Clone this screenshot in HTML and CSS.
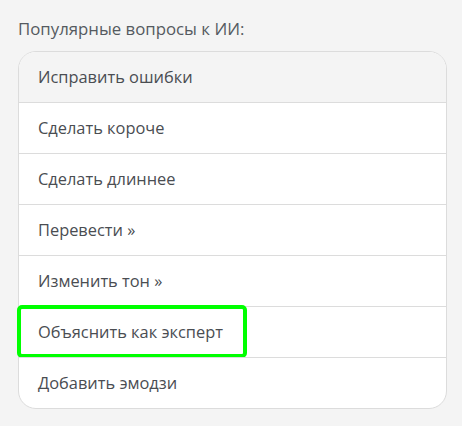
FILE: index.html
```html
<!DOCTYPE html>
<html lang="ru">
<head>
<meta charset="utf-8">
<link rel="stylesheet" href="styles.css">
</head>
<body>
<div class="panel">
  <div class="title">Популярные вопросы к ИИ:</div>
  <ul class="list">
    <li class="item active">Исправить ошибки</li>
    <li class="item">Сделать короче</li>
    <li class="item">Сделать длиннее</li>
    <li class="item">Перевести »</li>
    <li class="item">Изменить тон »</li>
    <li class="item highlighted"><span class="hl-box"></span>Объяснить как эксперт</li>
    <li class="item">Добавить эмодзи</li>
  </ul>
</div>
</body>
</html>
```
FILE: styles.css
```css
html, body {
  margin: 0;
  padding: 0;
  background: #f4f4f4;
}
body {
  font-family: "Open Sans", "Noto Sans", sans-serif;
  color: #4d4d4d;
}
.panel {
  padding: 17px 16px 0 18px;
}
.title {
  font-size: 16.8px;
  line-height: 23px;
  height: 34px;
  color: #555a60;
}
.list {
  list-style: none;
  margin: 0;
  padding: 0;
  width: 427px;
  background: #fff;
  border: 1px solid #dcdcdc;
  border-radius: 18px;
}
.item {
  position: relative;
  height: 50px;
  line-height: 50px;
  padding: 0 19px;
  font-size: 16.4px;
  border-top: 1px solid #dcdcdc;
  color: #4a4d52;
}
.item:first-child {
  border-top: none;
  border-radius: 17px 17px 0 0;
}
.item:last-child {
  border-radius: 0 0 17px 17px;
}
.item.active {
  background: #f4f4f4;
}
.hl-box {
  position: absolute;
  left: -2px;
  top: -2px;
  width: 222px;
  height: 45px;
  border: 4px solid #00ff00;
  border-radius: 5px;
  pointer-events: none;
}
```
